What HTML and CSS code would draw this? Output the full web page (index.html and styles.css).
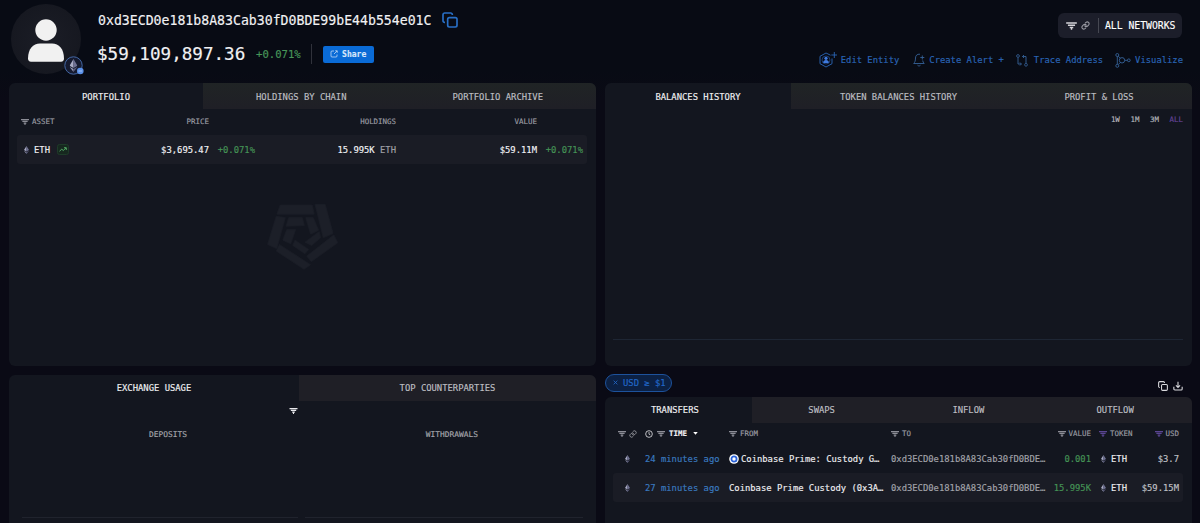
FILE: index.html
```html
<!DOCTYPE html>
<html lang="en">
<head>
    <meta charset="UTF-8">
    <meta name="viewport" content="width=device-width, initial-scale=1.0">
    <title>Address Overview</title>
    <link rel="stylesheet" href="styles.css">
</head>
<body>

<!-- shared icons -->
<svg class="sprite">
    <symbol id="filter" viewBox="0 0 12 9"><path d="M0 1h12M2 3.600h8M4 6.200h4M5.200 8h1.600" stroke="currentColor" stroke-width="1.700" fill="none"/></symbol>
    <symbol id="link" viewBox="0 0 24 24"><path d="M10 13a5 5 0 0 0 7.5.5l3-3a5 5 0 0 0-7-7l-1.800 1.700M14 11a5 5 0 0 0-7.500-.5l-3 3a5 5 0 0 0 7 7l1.800-1.700" stroke="currentColor" stroke-width="2.800" fill="none" stroke-linecap="round"/></symbol>
    <symbol id="copy" viewBox="0 0 24 24"><rect x="8.5" y="8.5" width="14" height="14" rx="2.5" fill="none" stroke="currentColor" stroke-width="2.500"/><path d="M4.500 15.500H4a2.500 2.500 0 0 1-2.500-2.500V4A2.500 2.500 0 0 1 4 1.500h9A2.500 2.500 0 0 1 15.500 4v.5" fill="none" stroke="currentColor" stroke-width="2.500"/></symbol>
    <symbol id="eth" viewBox="0 0 10 16"><path d="M5 0L0 8.200 5 11z" fill="#a9abc4"/><path d="M5 0l5 8.200L5 11z" fill="#6f7193"/><path d="M0 9.500L5 16v-3.600z" fill="#9799b5"/><path d="M10 9.500L5 16v-3.600z" fill="#5c5e80"/></symbol>
</svg>

<header class="header">
    <div class="avatar">
        <svg class="person" viewBox="0 0 36 43"><circle cx="18" cy="11" r="10.7"/><path d="M0 39.500C0 30 5 24.500 12 24.500h12c7 0 12 5.500 12 15 0 2-1 3.200-3 3.200H3c-2 0-3-1.200-3-3.200z"/></svg>
        <svg class="badge" viewBox="0 0 20 20"><circle cx="9.500" cy="9.500" r="8.700" fill="#161b30" stroke="#4468a6"/><svg x="5.500" y="3" width="8" height="13"><use href="#eth"/></svg><circle cx="16.300" cy="15" r="3.300" fill="#5b91e8"/><path d="M14.500 15h3.600" stroke="#b9d0f7" stroke-width=".8"/></svg>
    </div>
    <div class="identity">
        <div class="address">0xd3ECD0e181b8A83Cab30fD0BDE99bE44b554e01C <svg class="copy-big"><use href="#copy"/></svg></div>
        <div class="worth">
            <span class="balance">$59,109,897.36</span>
            <span class="change">+0.071%</span>
            <span class="divider"></span>
            <button class="share"><svg viewBox="0 0 16 16"><path d="M8 2H4a2 2 0 0 0-2 2v8a2 2 0 0 0 2 2h8a2 2 0 0 0 2-2V9M8 8l6-6M10.500 1.500h4v4" fill="none" stroke="currentColor" stroke-width="1.400"/></svg>Share</button>
        </div>
    </div>
    <div class="tools">
        <div class="networks"><svg class="net-filter"><use href="#filter"/></svg><svg class="net-link"><use href="#link"/></svg><span>ALL NETWORKS</span></div>
        <nav class="actions">
            <a><svg class="i-entity" viewBox="0 0 18 16"><path d="M11.500 3.200L7 1 1 4.300v7.400L7 15l6-3.300V6.500M15.300 0v6M12.300 3h6" fill="none" stroke="currentColor" stroke-width=".9"/><circle cx="7" cy="6.300" r="1.600" fill="#3f7be0"/><path d="M4 11c0-4 6-4 6 0z" fill="#3f7be0"/><circle cx="7" cy="8" r="4" fill="none" stroke="#234f98" stroke-width=".7"/></svg>Edit Entity</a>
            <a><svg class="i-alert" viewBox="0 0 12 14"><path d="M7 1.200C4 .8 2.500 2.800 2.500 5c0 3-.6 4-1.800 5.500h10.500C10.300 9.500 9.800 8.800 9.700 7.500M4.500 12.200c.8 1 2.300 1 3 0M9.300 2.500v4M7.300 4.500h4" fill="none" stroke="currentColor" stroke-width=".9"/></svg>Create Alert +</a>
            <a><svg class="i-trace" viewBox="0 0 12 13"><path d="M2 3.500v6.500h3M4 8.500L5.500 10 4 11.500M10 9V2.500H6.500M8 1L6.500 2.500 8 4" fill="none" stroke="currentColor" stroke-width=".9"/><circle cx="2" cy="2" r="1.400" fill="none" stroke="currentColor" stroke-width=".8"/><circle cx="10" cy="10.800" r="1.400" fill="none" stroke="currentColor" stroke-width=".8"/></svg>Trace Address</a>
            <a><svg class="i-visual" viewBox="0 0 16 15"><g fill="none" stroke="currentColor" stroke-width=".9"><circle cx="7" cy="7.300" r="2.700"/><circle cx="2.300" cy="2" r="1.500"/><circle cx="2.300" cy="12.800" r="1.500"/><circle cx="13.800" cy="7.300" r="1.400"/><path d="M3.300 3.200l2 2M3.300 11.500l2-2M9.700 7.300h2.700M2.300 3.500v7.800"/></g></svg>Visualize</a>
        </nav>
    </div>
</header>

<main class="grid">
    <div class="column">
        <section class="panel portfolio">
            <div class="tabs tabs-portfolio"><div class="tab active">PORTFOLIO</div><div class="tab">HOLDINGS BY CHAIN</div><div class="tab">PORTFOLIO ARCHIVE</div></div>
            <div class="assets">
                <div class="asset-row head"><span class="name"><svg class="filter"><use href="#filter"/></svg>ASSET</span><span>PRICE</span><span></span><span>HOLDINGS</span><span>VALUE</span><span></span></div>
                <div class="asset-row item">
                    <span class="name"><svg class="eth"><use href="#eth"/></svg>ETH<svg class="trend" viewBox="0 0 12 11"><rect x=".5" y=".5" width="11" height="10" rx="2" fill="#16281f" stroke="#1e3b29"/><path d="M2.500 7.200l2.300-2 1.500 1.300 2.700-2.600M7 3.700h2.300V6" fill="none" stroke="#59b56d" stroke-width=".9"/></svg></span>
                    <span>$3,695.47</span><span class="green">+0.071%</span>
                    <span>15.995K <i>ETH</i></span>
                    <span>$59.11M</span><span class="green">+0.071%</span>
                </div>
            </div>
            <svg class="watermark" viewBox="45 40 225 205">
                <path d="M90 46h97l6 28H80zM195 44h31l24 88-30 13zM252 136l12 24-80 57-14-17zM88 165l94 61-20 14-84-55zM78 80l28 4-26 94-28-13z"/>
                <path d="M116 84h41l6 24-55 2zM167 84h23l16 38-24 12zM208 126l4 19-27 23-20-10zM135 152l41 28-11 13-37-25zM110 120h27l-15 43-24-11z"/>
            </svg>
        </section>

        <section class="panel exchange">
            <div class="tabs tabs-exchange"><div class="tab active">EXCHANGE USAGE</div><div class="tab">TOP COUNTERPARTIES</div></div>
            <div class="exchange-filter"><svg><use href="#filter"/></svg></div>
            <div class="flows">
                <div class="flow">DEPOSITS</div>
                <div class="flow">WITHDRAWALS</div>
            </div>
        </section>
    </div>

    <div class="column">
        <section class="panel history">
            <div class="tabs tabs-history"><div class="tab active">BALANCES HISTORY</div><div class="tab">TOKEN BALANCES HISTORY</div><div class="tab">PROFIT &amp; LOSS</div></div>
            <div class="ranges"><span>1W</span><span>1M</span><span>3M</span><span class="selected">ALL</span></div>
            <div class="chart"></div>
        </section>

        <div class="filters">
            <div class="chip"><svg viewBox="0 0 8 8"><path d="M1 1l6 6M7 1L1 7" stroke="currentColor" stroke-width="1.300"/></svg>USD ≥ $1</div>
            <div class="export">
                <svg><use href="#copy"/></svg>
                <svg viewBox="0 0 24 24"><path d="M12 2v13M7 10.500l5 5 5-5M2 14v5a2.500 2.500 0 0 0 2.500 2.500h15A2.500 2.500 0 0 0 22 19v-5" fill="none" stroke="currentColor" stroke-width="2.600"/></svg>
            </div>
        </div>

        <section class="panel transfers">
            <div class="tabs tabs-transfers"><div class="tab active">TRANSFERS</div><div class="tab">SWAPS</div><div class="tab">INFLOW</div><div class="tab">OUTFLOW</div></div>
            <div class="transfer-table">
                <div class="transfer-row head">
                    <span class="pair"><svg class="filter"><use href="#filter"/></svg><svg class="link"><use href="#link"/></svg></span>
                    <span class="time-head"><svg class="clock" viewBox="0 0 12 12"><circle cx="6" cy="6" r="5" fill="none" stroke="currentColor" stroke-width="1.300"/><path d="M6 3v3.300l2 1" fill="none" stroke="currentColor" stroke-width="1.200"/></svg><svg class="filter"><use href="#filter"/></svg><b>TIME</b><svg class="caret" viewBox="0 0 6 4"><path d="M0 0h6L3 3.500z" fill="#fff"/></svg></span>
                    <span><svg class="filter"><use href="#filter"/></svg>FROM</span>
                    <span><svg class="filter"><use href="#filter"/></svg>TO</span>
                    <span class="right"><svg class="filter"><use href="#filter"/></svg>VALUE</span>
                    <span class="token"><svg class="filter purple"><use href="#filter"/></svg>TOKEN</span>
                    <span class="right"><svg class="filter purple"><use href="#filter"/></svg>USD</span>
                </div>
                <div class="transfer-row">
                    <span class="chain"><svg class="eth"><use href="#eth"/></svg></span>
                    <span class="when">24 minutes ago</span>
                    <span class="from"><svg class="coinbase" viewBox="0 0 10 10"><circle cx="5" cy="5" r="4.800" fill="#fff"/><circle cx="5" cy="5" r="2.600" fill="none" stroke="#2b63d9" stroke-width="1.800"/></svg>Coinbase Prime: Custody G…</span>
                    <span class="to">0xd3ECD0e181b8A83Cab30fD0BDE…</span>
                    <span class="right green">0.001</span>
                    <span class="token name"><svg class="eth"><use href="#eth"/></svg>ETH</span>
                    <span class="right">$3.7</span>
                </div>
                <div class="transfer-row alt">
                    <span class="chain"><svg class="eth"><use href="#eth"/></svg></span>
                    <span class="when">27 minutes ago</span>
                    <span class="from">Coinbase Prime Custody (0x3A…</span>
                    <span class="to">0xd3ECD0e181b8A83Cab30fD0BDE…</span>
                    <span class="right green">15.995K</span>
                    <span class="token name"><svg class="eth"><use href="#eth"/></svg>ETH</span>
                    <span class="right">$59.15M</span>
                </div>
            </div>
        </section>
    </div>
</main>

</body>
</html>
```
FILE: styles.css
```css
* {
    box-sizing: border-box;
}

body {
    margin: 0;
    height: 523px;
    overflow: hidden;
    display: flex;
    flex-direction: column;
    background: linear-gradient(#080b14 0, #080b14 70px, #0a0a15 100px);
    color: #e4e4e8;
    font-family: "DejaVu Sans Mono", "Liberation Mono", monospace;
    font-size: 8.86px;
    line-height: 12px;
    white-space: nowrap;
    -webkit-text-stroke: 0.15px currentColor;
}

svg {
    flex: none;
    display: block;
}

.sprite {
    position: absolute;
    width: 0;
    height: 0;
}

/* header */
.header {
    height: 83px;
    flex: none;
    display: flex;
    padding: 4px 17px 0 11px;
}

.avatar {
    position: relative;
    width: 70px;
    height: 70px;
    border-radius: 50%;
    background: radial-gradient(#1b1d26, #14161e);
    display: flex;
    justify-content: center;
    padding-top: 15px;
}

.person {
    width: 36px;
    height: 43px;
    fill: #f1f1f1;
}

.badge {
    position: absolute;
    left: 53px;
    top: 52px;
    width: 20px;
    height: 20px;
}

.identity {
    margin-left: 17px;
    padding-top: 8px;
}

.address {
    display: flex;
    align-items: center;
    height: 17px;
    font-size: 13.2px;
    color: #f1f1f3;
}

.copy-big {
    width: 16px;
    height: 16px;
    margin: -2px 0 0 11px;
    color: #286fc5;
}

.worth {
    display: flex;
    align-items: center;
    height: 20px;
    margin-top: 15px;
}

.balance {
    width: 149px;
    font-size: 17.6px;
    line-height: 20px;
    margin-left: -1px;
    color: #f1f1f3;
}

.change {
    margin-left: 10px;
    font-size: 10.6px;
    color: #479659;
}

.divider {
    width: 1px;
    height: 20px;
    margin-left: 10px;
    background: #30323b;
}

.share {
    display: flex;
    align-items: center;
    justify-content: center;
    gap: 4px;
    width: 51px;
    height: 17px;
    margin-left: 11px;
    padding: 0;
    border: 0;
    border-radius: 2px;
    background: #0a6bd6;
    color: #d8e8fb;
    font-family: inherit;
    font-size: 8px;
    font-weight: bold;
}

.share svg {
    width: 8px;
    height: 8px;
}

.tools {
    margin-left: auto;
    padding-top: 9px;
    display: flex;
    flex-direction: column;
    align-items: flex-end;
}

.networks {
    display: flex;
    align-items: center;
    width: 124px;
    height: 25px;
    margin-right: 1px;
    padding-left: 8px;
    border-radius: 6px;
    background: #1c1e2a;
    font-size: 9.75px;
    color: #fff;
}

.net-filter {
    width: 11px;
    height: 8px;
    color: #d5d5da;
}

.net-link {
    width: 9px;
    height: 9px;
    margin-left: 4px;
    color: #9a9ba3;
}

.networks span {
    margin-left: 8px;
    padding-left: 6px;
    border-left: 1px solid #464852;
    line-height: 15px;
}

.actions {
    display: flex;
    align-items: center;
    height: 16px;
    margin-top: 14px;
    color: #2a66b8;
}

.actions a {
    display: flex;
    align-items: center;
    margin-left: 12px;
}

.actions a:nth-child(2) {
    margin-left: 14px;
}

.i-entity {
    width: 18px;
    height: 16px;
    margin-right: 4px;
}

.i-alert {
    width: 12px;
    height: 14px;
    margin-right: 4px;
}

.i-trace {
    width: 12px;
    height: 13px;
    margin-right: 6px;
}

.i-visual {
    width: 16px;
    height: 15px;
    margin-right: 4px;
}

.i-alert,
.i-trace,
.i-visual {
    color: #366299;
}

/* panels */
.grid {
    flex: 1;
    min-height: 0;
    display: grid;
    grid-template-columns: 587px 587px;
    gap: 9px;
    padding: 0 8px 0 9px;
}

.column {
    display: flex;
    flex-direction: column;
    min-height: 0;
}

.panel {
    background: #13161f;
    border-radius: 6px;
    overflow: hidden;
}

.tabs {
    display: grid;
    height: 26px;
}

.tabs-portfolio {
    grid-template-columns: 194px 1fr 1fr;
}

.tabs-exchange {
    grid-template-columns: 290px 1fr;
}

.tabs-history {
    grid-template-columns: 186px 215px 1fr;
}

.tabs-transfers {
    grid-template-columns: repeat(4, 1fr);
}

.tab {
    display: flex;
    align-items: center;
    justify-content: center;
    background: #1f1f26;
    color: #bdbec2;
}

.tabs-portfolio .tab,
.tabs-history .tab {
    padding-top: 1px;
    background: linear-gradient(#202425, #1f1f26);
}

.tabs-transfers .tab {
    padding-right: 7px;
}

.tabs .tab.active {
    background: none;
    color: #f0f0f2;
}

.portfolio,
.history {
    height: 283px;
    flex: none;
}

.assets {
    padding: 0 9px 0 8px;
}

.asset-row {
    display: grid;
    grid-template-columns: 100px 92px 46px 141px 141px 46px;
    align-items: center;
    height: 29px;
    text-align: right;
    border-radius: 3px;
}

.asset-row .name {
    display: flex;
    align-items: center;
    padding-left: 7px;
}

.asset-row.head,
.transfer-row.head {
    font-size: 7.45px;
    color: #9b9ca3;
}

.asset-row.head {
    height: 26px;
}

.asset-row.head .name {
    padding-left: 4px;
}

.asset-row.item {
    background: #1a1c25;
    color: #f3f3f5;
}

.asset-row i {
    font-style: normal;
    color: #a2a3a9;
}

.filter {
    width: 8px;
    height: 6px;
    margin-right: 3px;
    color: #8c8d96;
}

.eth {
    width: 5px;
    height: 8px;
}

.asset-row .eth {
    margin-right: 5px;
}

.trend {
    width: 12px;
    height: 11px;
    margin-left: 7px;
}

.green {
    color: #459456;
}

.watermark {
    display: block;
    width: 75px;
    height: 68px;
    margin: 39px auto 0;
    fill: #1c1f28;
    stroke: #1c1f28;
    stroke-width: 2;
}

/* exchange usage */
.exchange {
    flex: 1;
    margin-top: 9px;
    border-radius: 6px 6px 0 0;
}

.exchange-filter {
    display: flex;
    margin: 7px 0 0 280px;
    color: #e8e8ec;
}

.exchange-filter svg {
    width: 9px;
    height: 6px;
}

.flows {
    display: grid;
    grid-template-columns: 276px 278px;
    gap: 7px;
    margin: 14px 0 0 13px;
}

.flow {
    height: 90px;
    padding: 1px 0 0 16px;
    border-bottom: 1px solid #20232d;
    text-align: center;
    font-size: 7.9px;
    color: #a4a5ab;
}

/* history */
.ranges {
    display: flex;
    justify-content: flex-end;
    gap: 10.6px;
    padding: 5px 9px 0;
    font-size: 7.45px;
    color: #b5b6bb;
}

.ranges .selected {
    color: #654499;
}

.chart {
    height: 214px;
    margin: 0 9px 0 8px;
    border-bottom: 1px solid #1e2634;
}

/* transfers */
.filters {
    display: flex;
    justify-content: space-between;
    align-items: center;
    height: 17px;
    margin: 8px 9px 6px 0;
}

.chip {
    display: flex;
    align-items: center;
    gap: 5px;
    width: 67px;
    height: 18px;
    padding-left: 7px;
    border: 1px solid #1d529c;
    border-radius: 9px;
    background: #0c2144;
    color: #2269ca;
}

.chip svg {
    width: 5px;
    height: 5px;
}

.export {
    display: flex;
    gap: 5px;
    padding-top: 6px;
    color: #d9d9dd;
}

.export svg {
    width: 10px;
    height: 10px;
}

.transfers {
    flex: 1;
    border-radius: 6px 6px 0 0;
}

.transfer-table {
    padding: 0 9px 0 8px;
}

.transfer-row {
    display: grid;
    grid-template-columns: 32px 84px 162px 163px 37px 52px 36px;
    align-items: center;
    height: 29px;
    border-radius: 3px;
    color: #c0c1c6;
}

.transfer-row.head {
    height: 21px;
}

.transfer-row span {
    display: flex;
    align-items: center;
}

.transfer-row .right {
    justify-content: flex-end;
}

.transfer-row .green {
    color: #459456;
}

.transfer-row.alt {
    background: #1a1c25;
}

.pair {
    padding-left: 5px;
}

.link {
    width: 8px;
    height: 8px;
}

.clock {
    width: 8px;
    height: 8px;
    margin-right: 4px;
    color: #d5d5d9;
}

.transfer-row b {
    color: #f0f0f3;
}

.time-head .filter {
    margin-right: 4px;
}

.caret {
    width: 5px;
    height: 3px;
    margin-left: 6px;
}

.purple {
    color: #5a4592;
}

.head .token {
    padding-left: 8px;
}

.chain {
    padding-left: 12px;
}

.transfer-row .when {
    color: #3a7bc0;
}

.transfer-row .from,
.transfer-row .name {
    color: #eeeef1;
}

.coinbase {
    width: 10px;
    height: 10px;
    margin-right: 2px;
}

.transfer-row .to {
    color: #a3a4ab;
}

.transfer-row .name {
    padding-left: 10px;
}

.name .eth {
    margin-right: 5px;
}
```
